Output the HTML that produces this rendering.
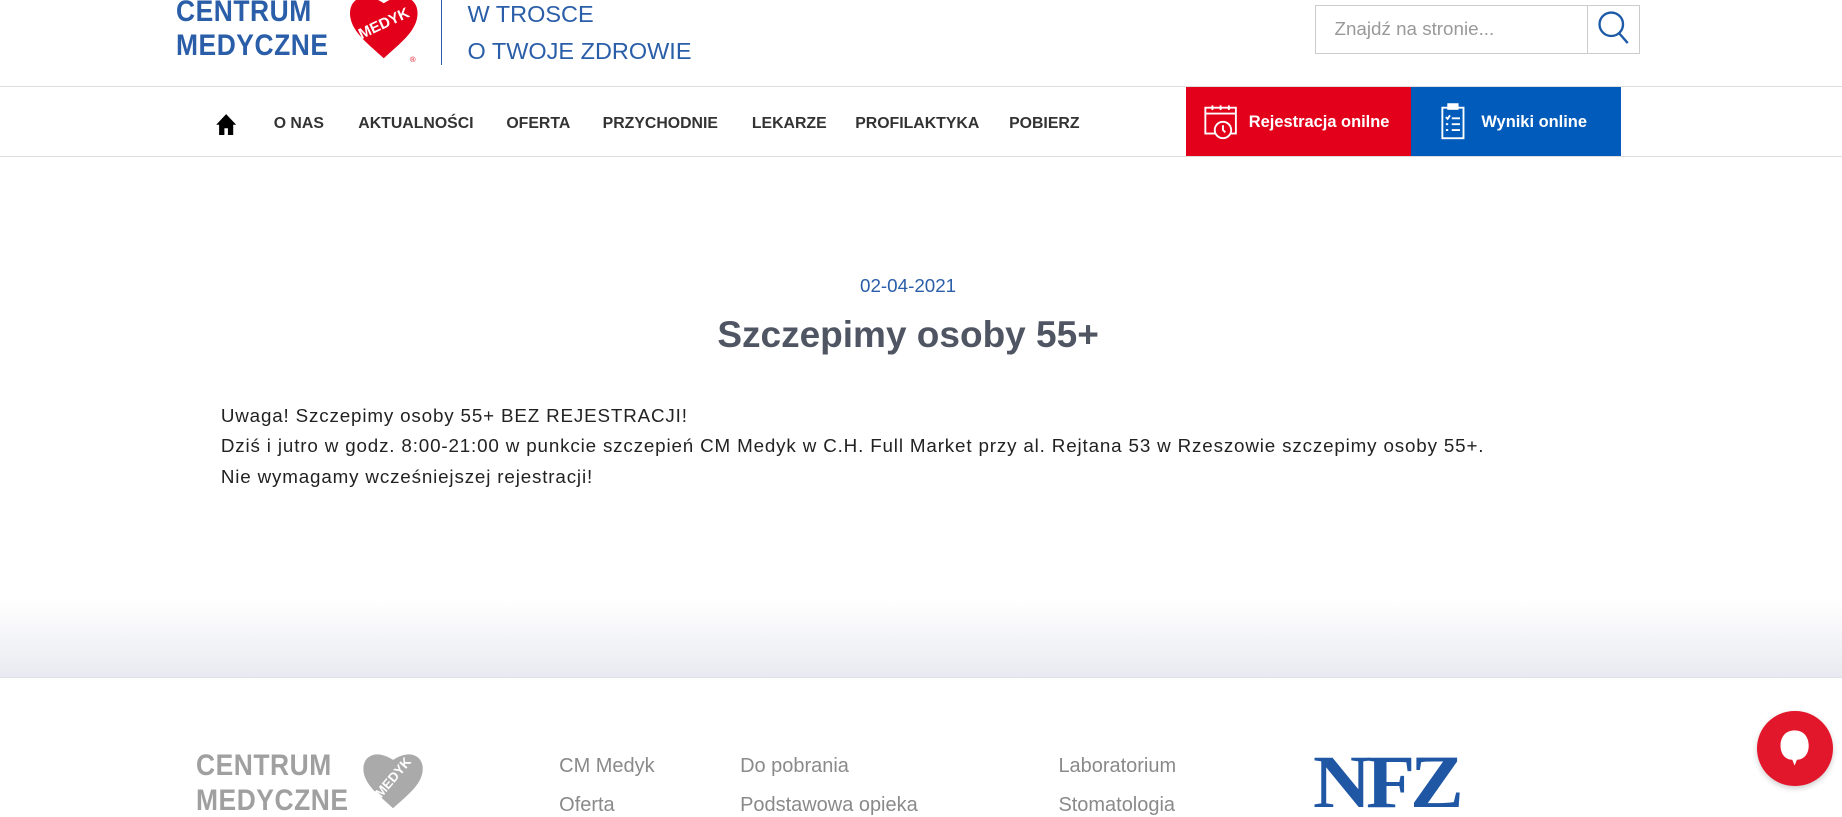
<!DOCTYPE html>
<html><head><meta charset="utf-8">
<style>
html,body{margin:0;padding:0;background:#fff;overflow:hidden;width:1842px;height:817px}
#w{position:relative;width:1568px;height:696px;zoom:1.17474;font-family:"Liberation Sans",sans-serif;overflow:hidden}
.a{position:absolute;white-space:nowrap}
.nav{top:98px;font-weight:bold;font-size:13.5px;color:#333}
.ft{font-size:17px;color:#8a8a8a}
</style></head><body><div id="w">
<!-- logo -->
<div class="a" style="left:150px;top:-4px;font-weight:bold;font-size:25px;color:#2a5ea8;line-height:29px;letter-spacing:0.5px;transform:scaleX(0.9);transform-origin:left">CENTRUM<br>MEDYCZNE</div>
<svg class="a" style="left:294px;top:-6px" width="66" height="60" viewBox="0 0 62 56"><path d="M31 52 C18 40 4 30 4 16 C4 4 16 -2 31 8 C46 -2 58 4 58 16 C58 30 44 40 31 52Z" fill="#e2001a"/><text x="31" y="28" font-size="12" font-weight="bold" fill="#fff" text-anchor="middle" transform="rotate(-25 31 24)" font-family="Liberation Sans">MEDYK</text><text x="52" y="55" font-size="6" fill="#e2001a">®</text></svg>
<div class="a" style="left:375px;top:0;width:1px;height:55px;background:#2a5ea8"></div>
<div class="a" style="left:398px;top:-3px;font-size:20px;color:#2a5ea8;line-height:31px">W TROSCE<br>O TWOJE ZDROWIE</div>
<!-- search -->
<div class="a" style="left:1119px;top:4px;width:275px;height:40px;border:1px solid #ccc"></div>
<div class="a" style="left:1351px;top:5px;width:1px;height:40px;background:#ccc"></div>
<div class="a" style="left:1136px;top:15px;font-size:16px;color:#999">Znajdź na stronie...</div>
<svg class="a" style="left:1359px;top:8px" width="30" height="32" viewBox="0 0 30 32"><circle cx="13" cy="13" r="10" fill="none" stroke="#1c5aa8" stroke-width="2"/><line x1="20" y1="21" x2="27" y2="29" stroke="#1c5aa8" stroke-width="2"/></svg>
<!-- nav -->
<div class="a" style="left:0;top:73px;width:1568px;height:1px;background:#ddd"></div>
<div class="a" style="left:0;top:133px;width:1568px;height:1px;background:#ddd"></div>
<svg class="a" style="left:183px;top:96px" width="19" height="19" viewBox="0 0 19 19"><path d="M9.5 1 L18 10 L15.5 10 L15.5 19 L11 19 L11 13 L8 13 L8 19 L3.5 19 L3.5 10 L1 10Z" fill="#000"/></svg>
<div class="a nav" style="left:233px">O NAS</div>
<div class="a nav" style="left:305px">AKTUALNOŚCI</div>
<div class="a nav" style="left:431px">OFERTA</div>
<div class="a nav" style="left:513px">PRZYCHODNIE</div>
<div class="a nav" style="left:640px">LEKARZE</div>
<div class="a nav" style="left:728px">PROFILAKTYKA</div>
<div class="a nav" style="left:859px">POBIERZ</div>
<div class="a" style="left:1010px;top:74px;width:191px;height:59px;background:#e2001a"></div>
<div class="a" style="left:1201px;top:74px;width:179px;height:59px;background:#005bbb"></div>
<svg class="a" style="left:1024px;top:88px" width="32" height="32" viewBox="0 0 32 32" fill="none" stroke="#fff" stroke-width="1.6"><rect x="2" y="4" width="26" height="22"/><line x1="2" y1="9" x2="28" y2="9"/><line x1="8" y1="2" x2="8" y2="6"/><line x1="15" y1="2" x2="15" y2="6"/><line x1="22" y1="2" x2="22" y2="6"/><circle cx="17" cy="23" r="7" fill="#e2001a"/><path d="M17 19v4l2 2"/></svg>
<div class="a" style="left:1063px;top:96px;font-weight:bold;font-size:14px;color:#fff">Rejestracja onilne</div>
<svg class="a" style="left:1226px;top:88px" width="22" height="32" viewBox="0 0 22 32" fill="none" stroke="#fff" stroke-width="1.6"><rect x="2" y="4" width="18" height="26"/><rect x="7" y="1" width="8" height="4" fill="#fff"/><path d="M5 12l1.5 1.5 2-3M5 18h2M5 23h2M10 13h7M10 18h7M10 23h7"/></svg>
<div class="a" style="left:1261px;top:96px;font-weight:bold;font-size:14px;color:#fff">Wyniki online</div>
<!-- content -->
<div class="a" style="left:0;width:1546px;text-align:center;top:234px;font-size:16px;color:#2a5ea8">02-04-2021</div>
<div class="a" style="left:0;width:1546px;text-align:center;top:267px;font-size:31.5px;font-weight:bold;color:#4f5562">Szczepimy osoby 55+</div>
<div class="a" style="left:188px;top:341px;font-size:16px;line-height:26px;color:#222;letter-spacing:0.72px">Uwaga! Szczepimy osoby 55+ BEZ REJESTRACJI!<br>Dziś i jutro w godz. 8:00-21:00 w punkcie szczepień CM Medyk w C.H. Full Market przy al. Rejtana 53 w Rzeszowie szczepimy osoby 55+.<br>Nie wymagamy wcześniejszej rejestracji!</div>
<div class="a" style="left:0;top:510px;width:1568px;height:66px;background:linear-gradient(#fff,#e9eaf1)"></div>
<div class="a" style="left:0;top:576px;width:1568px;height:1px;background:#e0e0e8"></div>
<!-- footer -->
<div class="a" style="left:167px;top:638px;font-weight:bold;font-size:25px;color:#a0a0a0;line-height:29px;letter-spacing:0.5px;transform:scaleX(0.9);transform-origin:left">CENTRUM<br>MEDYCZNE</div>
<svg class="a" style="left:306px;top:638px" width="58" height="56" viewBox="0 0 62 56"><path d="M31 52 C18 40 4 30 4 16 C4 4 16 -2 31 8 C46 -2 58 4 58 16 C58 30 44 40 31 52Z" fill="#aaa"/><text x="31" y="28" font-size="12" font-weight="bold" fill="#fff" text-anchor="middle" transform="rotate(-50 31 24)" font-family="Liberation Sans">MEDYK</text></svg>
<div class="a ft" style="left:476px;top:643px">CM Medyk</div>
<div class="a ft" style="left:476px;top:676px">Oferta</div>
<div class="a ft" style="left:630px;top:643px">Do pobrania</div>
<div class="a ft" style="left:630px;top:676px">Podstawowa opieka</div>
<div class="a ft" style="left:901px;top:643px">Laboratorium</div>
<div class="a ft" style="left:901px;top:676px">Stomatologia</div>
<div class="a" style="left:1118px;top:630px;font-family:'Liberation Serif',serif;font-weight:bold;font-size:64px;color:#1f57a4;letter-spacing:-4px;transform:scaleX(1.07);transform-origin:left">NFZ</div>
<div class="a" style="left:1496px;top:605px;width:64px;height:64px;border-radius:50%;background:#e3172c;box-shadow:0 2px 5px rgba(0,0,0,.2)"></div>
<svg class="a" style="left:1513px;top:620px" width="30" height="34" viewBox="0 0 30 34"><path d="M15 2 C7 2 3 8 3 15 C3 22 7 27 13 27 L15 32 L17 27 C23 27 27 22 27 15 C27 8 23 2 15 2Z" fill="#fff"/></svg>
</div></body></html>
